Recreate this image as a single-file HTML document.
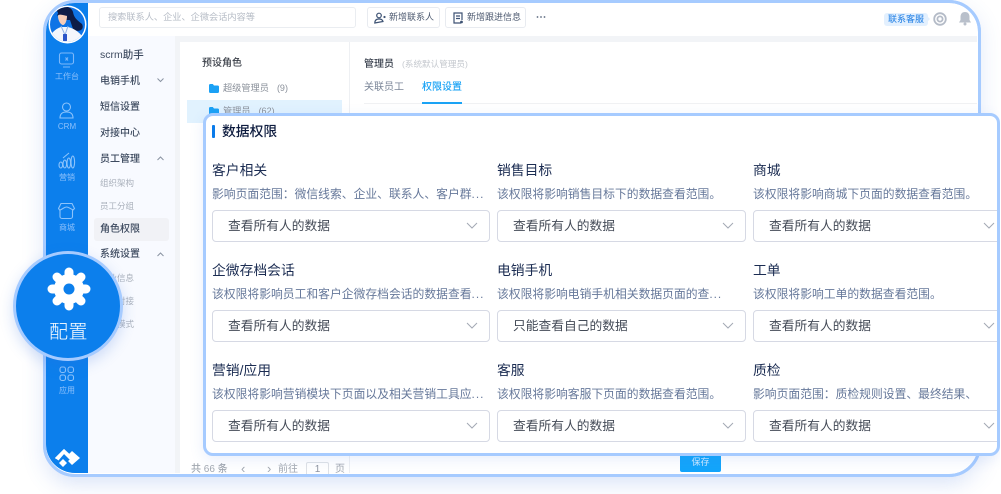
<!DOCTYPE html>
<html lang="zh"><head><meta charset="utf-8"><title>配置</title>
<style>
*{box-sizing:border-box}
html,body{margin:0;padding:0;width:1001px;height:494px;overflow:hidden;background:#fff}
body{font-family:"Liberation Sans","Noto Sans CJK SC",sans-serif;position:relative}
#root{position:absolute;left:0;top:0;width:1001px;height:494px;overflow:hidden;filter:blur(.35px)}
.a{position:absolute;white-space:nowrap}
#win{position:absolute;left:43px;top:0;width:938px;height:477px;border:3px solid #a6cbff;border-radius:32px;background:#fff;overflow:hidden;box-shadow:0 8px 22px rgba(70,120,220,.16)}
#shadow{position:absolute;left:60px;top:440px;width:900px;height:48px;background:linear-gradient(#e8eefc,#fff);filter:blur(6px)}
.side{position:absolute;left:46px;width:42px;text-align:center;color:#8cc0fb;font-size:8px;line-height:10px}
.m{position:absolute;left:100px;font-size:10px;font-weight:500;color:#3d4a5f;line-height:14px;white-space:nowrap}
.s{position:absolute;left:100px;font-size:8.500px;color:#a9b0bb;line-height:12px;white-space:nowrap}
#card{position:absolute;left:203px;top:113px;width:797px;height:343px;background:#fff;border:3px solid #a6cbff;border-radius:10px;box-shadow:0 4px 14px rgba(70,120,220,.12)}
.t{position:absolute;font-size:13.800px;line-height:18px;color:#1b2c52;white-space:nowrap;margin-top:1px}
.d{position:absolute;font-size:11.800px;line-height:16px;color:#66789a;white-space:nowrap;margin-top:1px}
.d i{font-style:normal;letter-spacing:1px}
.sel{position:absolute;height:32px;border:1px solid #d6d9e4;border-radius:4px;background:#fff;font-size:12.750px;line-height:30px;color:#444b57;padding-left:15px;white-space:nowrap}
.sel svg{position:absolute;right:11px;top:11px}
.btn{position:absolute;top:7px;height:21px;border:1px solid #e8ebf0;border-radius:3px;background:#fff;font-size:9px;line-height:19px;color:#4d5a70;white-space:nowrap}
</style></head><body><div id="root">
<div id="shadow"></div>
<div id="win"></div>

<!-- blue rail -->
<div class="a" style="left:46px;top:3px;width:42px;height:470px;background:#0c7fec;border-radius:29px 0 0 29px"></div>
<!-- top strip -->
<div class="a" style="left:88px;top:36px;width:889px;height:6px;background:#f2f4f7"></div>
<!-- second sidebar -->
<div class="a" style="left:88px;top:36px;width:87px;height:437px;background:#f8faff"></div>
<div class="a" style="left:175px;top:36px;width:5px;height:437px;background:#f2f4f7"></div>
<!-- panel divider -->
<div class="a" style="left:349px;top:42px;width:1px;height:431px;background:#eef0f3"></div>

<!-- avatar -->
<svg class="a" style="left:48px;top:5px" width="39" height="39" viewBox="0 0 39 39">
<circle cx="19.500" cy="19.500" r="19" fill="#fff"/>
<clipPath id="c"><circle cx="19.500" cy="19.500" r="17.500"/></clipPath>
<g clip-path="url(#c)">
<rect width="39" height="39" fill="#0f74e6"/>
<path d="M9 6C12 0 23 0 25 7C26 13 29 15 34 19C37 25 30 28 25 24L22 15L14 15Z" fill="#0e1c46"/>
<path d="M10 11C11 7 18 7 19 11C19 16 17 20 15 20C13 20 10 16 10 11Z" fill="#f7cdb8"/>
<path d="M9 11C10 5 18 5 20 11C16 11 12 8 9 11Z" fill="#101c48"/>
<path d="M0 39C1 29 7 24 13 22L20 22C28 24 34 29 39 39Z" fill="#f4f7fc"/>
<path d="M13 21L17 30L20 21" fill="none" stroke="#8fb3e8" stroke-width="1"/>
<rect x="15" y="29" width="4" height="7" rx=".5" fill="#2c55c8"/>
</g></svg>

<!-- rail icons -->
<svg class="a" style="left:58px;top:52px" width="18" height="18" viewBox="0 0 18 18" fill="none" stroke="#7db8fa" stroke-width="1.100"><rect x="1.500" y="1" width="14" height="11" rx="2"/><path d="M5 15h7M7.500 5.500l2.500 3M10 5.500l-2.500 3"/></svg>
<div class="side" style="top:72px">工作台</div>
<svg class="a" style="left:58px;top:101px" width="18" height="18" viewBox="0 0 18 18" fill="none" stroke="#8cc3fb" stroke-width="1.100"><circle cx="8.500" cy="6" r="4"/><path d="M2 17c0-5 3-6 6.500-6s6.500 1 6.500 6z"/></svg>
<div class="side" style="top:122px">CRM</div>
<svg class="a" style="left:58px;top:152px" width="18" height="18" viewBox="0 0 18 18" fill="none" stroke="#8cc3fb" stroke-width="1.100"><ellipse cx="2.800" cy="13" rx="1.800" ry="3"/><ellipse cx="6.800" cy="12" rx="1.800" ry="4"/><ellipse cx="10.800" cy="11" rx="1.800" ry="5"/><ellipse cx="14.800" cy="10" rx="1.800" ry="6"/><path d="M5 6l6-5"/></svg>
<div class="side" style="top:173px">营销</div>
<svg class="a" style="left:58px;top:202px" width="18" height="18" viewBox="0 0 18 18" fill="none" stroke="#8cc3fb" stroke-width="1.100"><path d="M3 1.500h11l2.500 5-2 2v6a2 2 0 0 1-2 2H4a2 2 0 0 1-2-2v-6l-1.500-2z"/><path d="M2 8c3-1 4-3 6.500-3s4 2 7 3"/></svg>
<div class="side" style="top:223px">商城</div>
<svg class="a" style="left:59px;top:366px" width="16" height="16" viewBox="0 0 16 16" fill="none" stroke="#8cc3fb" stroke-width="1.100"><rect x="1" y="1" width="5.500" height="5.500" rx="2"/><rect x="9" y="1" width="5.500" height="5.500" rx="2"/><rect x="1" y="9" width="5.500" height="5.500" rx="2"/><rect x="9" y="9" width="5.500" height="5.500" rx="2"/></svg>
<div class="side" style="top:386px">应用</div>
<!-- logo -->
<svg class="a" style="left:54px;top:448px" width="28" height="20" viewBox="0 0 28 20"><path d="M1 10L10 1L15 6L18 3L26 10L18 17L14 13L18 10L15.500 7.500L10 6L5 11L2 11Z" fill="#fff"/><path d="M10 1L20 10L17 13L10 6L4.500 12.500L1 10Z" fill="#fff"/><path d="M5 15L9 11L13 15L9 19Z" fill="#fff"/></svg>

<!-- top bar -->
<div class="a" style="left:99px;top:7px;width:257px;height:21px;border:1px solid #eaedf1;border-radius:3px;background:#fff;font-size:9.200px;line-height:19px;color:#b6bcc6;padding-left:8px">搜索联系人、企业、企微会话内容等</div>
<div class="btn" style="left:367px;width:73px;padding-left:21px">新增联系人</div>
<svg class="a" style="left:374px;top:12px" width="12" height="12" viewBox="0 0 12 12" fill="none" stroke="#3d5273" stroke-width="1.200"><circle cx="5" cy="3.500" r="2.300"/><path d="M.8 11c0-3 2-4 4.200-4s3.500.7 4 2.500z"/><circle cx="10.500" cy="5" r=".5"/></svg>
<div class="btn" style="left:445px;width:81px;padding-left:21px">新增跟进信息</div>
<svg class="a" style="left:452px;top:12px" width="12" height="12" viewBox="0 0 12 12" fill="none" stroke="#3d5273" stroke-width="1.200"><path d="M9 11H2V1h8v7"/><path d="M4 4h4M4 6.500h4"/><circle cx="9.500" cy="10" r=".8" fill="#3d5273"/></svg>
<svg class="a" style="left:536px;top:15px" width="10" height="4" viewBox="0 0 10 4" fill="#5d6a80"><circle cx="1.500" cy="2" r=".9"/><circle cx="5" cy="2" r=".9"/><circle cx="8.500" cy="2" r=".9"/></svg>
<div class="a" style="left:884px;top:13px;width:44px;height:13px;background:#e3f0fe;border-radius:3px;font-size:9px;line-height:13px;color:#3a8ee8;text-align:center;font-weight:500">联系客服</div>
<div class="a" style="left:927px;top:16px;width:0;height:0;border:3.500px solid transparent;border-left-color:#e3f0fe"></div>
<svg class="a" style="left:933px;top:12px" width="14" height="14" viewBox="0 0 14 14" fill="none" stroke="#b4bbc7" stroke-width="1.800"><circle cx="7" cy="7" r="5.800"/><circle cx="7" cy="7" r="2.600"/></svg>
<svg class="a" style="left:958px;top:11px" width="14" height="15" viewBox="0 0 14 15"><path d="M7 1c3 0 4.500 2 4.500 5v3L13 11.500H1L2.500 9V6C2.500 3 4 1 7 1z" fill="#b9c0cb"/><circle cx="7" cy="13" r="1.500" fill="#b9c0cb"/></svg>

<!-- sidebar menu -->
<div class="m" style="top:48px;font-size:10.500px">scrm助手</div>
<div class="m" style="top:75px">电销手机</div>
<svg class="a" style="left:156px;top:77px" width="9" height="7" viewBox="0 0 9 7" fill="none" stroke="#8a93a2"><path d="M1.500 1.500L4.500 4.500L7.500 1.500"/></svg>
<div class="m" style="top:101px">短信设置</div>
<div class="m" style="top:127px">对接中心</div>
<div class="m" style="top:153px">员工管理</div>
<svg class="a" style="left:156px;top:155px" width="9" height="7" viewBox="0 0 9 7" fill="none" stroke="#8a93a2"><path d="M1.500 5L4.500 2L7.500 5"/></svg>
<div class="s" style="top:177px">组织架构</div>
<div class="s" style="top:200px">员工分组</div>
<div class="a" style="left:94px;top:218px;width:75px;height:23px;background:#f1f2f6;border-radius:3px"></div>
<div class="m" style="top:223px">角色权限</div>
<div class="m" style="top:248px">系统设置</div>
<svg class="a" style="left:156px;top:251px" width="9" height="7" viewBox="0 0 9 7" fill="none" stroke="#8a93a2"><path d="M1.500 5L4.500 2L7.500 5"/></svg>
<div class="s" style="top:272px">企业信息</div>
<div class="s" style="top:295px">系统对接</div>
<div class="s" style="top:318px">工作模式</div>

<!-- role panel -->
<div class="a" style="left:202px;top:57px;font-size:10px;line-height:14px;font-weight:500;color:#3a3f48">预设角色</div>
<svg class="a" style="left:209px;top:84px" width="10" height="9" viewBox="0 0 10 9"><path d="M0 1.500C0 .6.500 0 1.300 0h2.500L5 1.500h3.700c.8 0 1.300.5 1.300 1.300V7.500C10 8.400 9.500 9 8.700 9H1.300C.5 9 0 8.400 0 7.500z" fill="#1ba1f5"/></svg>
<div class="a" style="left:223px;top:81px;font-size:9.200px;line-height:14px;color:#8a909a">超级管理员<span style="margin-left:8px;font-size:9px;color:#8a909a">(9)</span></div>
<div class="a" style="left:187px;top:100px;width:155px;height:23px;background:#e1f2fe"></div>
<svg class="a" style="left:209px;top:107px" width="10" height="9" viewBox="0 0 10 9"><path d="M0 1.500C0 .6.500 0 1.300 0h2.500L5 1.500h3.700c.8 0 1.300.5 1.300 1.300V7.500C10 8.400 9.500 9 8.700 9H1.300C.5 9 0 8.400 0 7.500z" fill="#1ba1f5"/></svg>
<div class="a" style="left:223px;top:104px;font-size:9.200px;line-height:14px;color:#8a909a">管理员<span style="margin-left:8px;font-size:9px">(62)</span></div>

<!-- right head -->
<div class="a" style="left:364px;top:57px;font-size:10px;line-height:14px;font-weight:500;color:#3c4350">管理员<span style="margin-left:8px;font-size:8.600px;font-weight:400;color:#c4c8ce">(系统默认管理员)</span></div>
<div class="a" style="left:364px;top:81px;font-size:10px;line-height:14px;color:#7b8698">关联员工</div>
<div class="a" style="left:422px;top:81px;font-size:10px;line-height:14px;color:#1aa3f5;font-weight:500">权限设置</div>
<div class="a" style="left:364px;top:103px;width:613px;height:1px;background:#f0f1f3"></div>
<div class="a" style="left:422px;top:102px;width:40px;height:2px;background:#1aa3f5"></div>

<!-- bottom content -->
<div class="a" style="left:191px;top:463px;font-size:10px;line-height:14px;color:#a2a8b0;font-weight:500">共 66 条</div>
<div class="a" style="left:241px;top:462px;font-size:13px;line-height:14px;color:#a2a8b0">‹</div>
<div class="a" style="left:267px;top:462px;font-size:13px;line-height:14px;color:#a2a8b0">›</div>
<div class="a" style="left:278px;top:463px;font-size:10px;line-height:14px;color:#a2a8b0">前往</div>
<div class="a" style="left:306px;top:462px;width:23px;height:13px;border:1px solid #dfe2e6;border-bottom:0;border-radius:2px 2px 0 0;font-size:10px;line-height:14px;color:#8f95a0;text-align:center">1</div>
<div class="a" style="left:335px;top:463px;font-size:10px;line-height:14px;color:#a2a8b0">页</div>
<div class="a" style="left:680px;top:452px;width:41px;height:20px;background:#13a5fb;border-radius:2px;color:#cfeaff;font-size:9px;line-height:20px;text-align:center">保存</div>

<!-- window border on top of content -->
<div class="a" style="left:43px;top:0;width:938px;height:477px;border:3px solid #a6cbff;border-radius:32px;pointer-events:none"></div>

<!-- card -->
<div id="card"></div>
<div class="a" style="left:212px;top:125px;width:3px;height:13px;background:#0a7bea;border-radius:1px"></div>
<div class="a" style="left:222px;top:123px;font-size:13.800px;line-height:18px;font-weight:500;color:#0e1c3f">数据权限</div>

<div class="t" style="left:212px;top:161px">客户相关</div>
<div class="d" style="left:212px;top:185px">影响页面范围：微信线索、企业、联系人、客户群<i>...</i></div>
<div class="sel" style="left:212px;top:210px;width:278px">查看所有人的数据<svg width="12" height="8" viewBox="0 0 12 8" fill="none" stroke="#a3a9b4"><path d="M1 1l5 5 5-5"/></svg></div>
<div class="t" style="left:497px;top:161px">销售目标</div>
<div class="d" style="left:497px;top:185px">该权限将影响销售目标下的数据查看范围。</div>
<div class="sel" style="left:497px;top:210px;width:249px">查看所有人的数据<svg width="12" height="8" viewBox="0 0 12 8" fill="none" stroke="#a3a9b4"><path d="M1 1l5 5 5-5"/></svg></div>
<div class="t" style="left:753px;top:161px">商城</div>
<div class="d" style="left:753px;top:185px">该权限将影响商城下页面的数据查看范围。</div>
<div class="sel" style="left:753px;top:210px;width:250px">查看所有人的数据<svg style="right:7px" width="12" height="8" viewBox="0 0 12 8" fill="none" stroke="#a3a9b4"><path d="M1 1l5 5 5-5"/></svg></div>

<div class="t" style="left:212px;top:261px">企微存档会话</div>
<div class="d" style="left:212px;top:285px">该权限将影响员工和客户企微存档会话的数据查看<i>...</i></div>
<div class="sel" style="left:212px;top:310px;width:278px">查看所有人的数据<svg width="12" height="8" viewBox="0 0 12 8" fill="none" stroke="#a3a9b4"><path d="M1 1l5 5 5-5"/></svg></div>
<div class="t" style="left:497px;top:261px">电销手机</div>
<div class="d" style="left:497px;top:285px">该权限将影响电销手机相关数据页面的查<i>...</i></div>
<div class="sel" style="left:497px;top:310px;width:249px">只能查看自己的数据<svg width="12" height="8" viewBox="0 0 12 8" fill="none" stroke="#a3a9b4"><path d="M1 1l5 5 5-5"/></svg></div>
<div class="t" style="left:753px;top:261px">工单</div>
<div class="d" style="left:753px;top:285px">该权限将影响工单的数据查看范围。</div>
<div class="sel" style="left:753px;top:310px;width:250px">查看所有人的数据<svg style="right:7px" width="12" height="8" viewBox="0 0 12 8" fill="none" stroke="#a3a9b4"><path d="M1 1l5 5 5-5"/></svg></div>

<div class="t" style="left:212px;top:361px">营销/应用</div>
<div class="d" style="left:212px;top:385px">该权限将影响营销模块下页面以及相关营销工具应<i>...</i></div>
<div class="sel" style="left:212px;top:410px;width:278px">查看所有人的数据<svg width="12" height="8" viewBox="0 0 12 8" fill="none" stroke="#a3a9b4"><path d="M1 1l5 5 5-5"/></svg></div>
<div class="t" style="left:497px;top:361px">客服</div>
<div class="d" style="left:497px;top:385px">该权限将影响客服下页面的数据查看范围。</div>
<div class="sel" style="left:497px;top:410px;width:249px">查看所有人的数据<svg width="12" height="8" viewBox="0 0 12 8" fill="none" stroke="#a3a9b4"><path d="M1 1l5 5 5-5"/></svg></div>
<div class="t" style="left:753px;top:361px">质检</div>
<div class="d" style="left:753px;top:385px">影响页面范围：质检规则设置、最终结果、</div>
<div class="sel" style="left:753px;top:410px;width:250px">查看所有人的数据<svg style="right:7px" width="12" height="8" viewBox="0 0 12 8" fill="none" stroke="#a3a9b4"><path d="M1 1l5 5 5-5"/></svg></div>
<div class="a" style="left:997px;top:125px;width:3px;height:320px;background:#a6cbff"></div>
<div class="a" style="left:1000px;top:100px;width:1px;height:394px;background:#fff"></div>

<!-- config circle -->
<div class="a" style="left:13px;top:251px;width:110px;height:110px;border-radius:50%;background:#0c7fec;border:3px solid #a6cbff;box-shadow:0 5px 14px rgba(50,110,220,.22)"></div>
<svg class="a" style="left:47px;top:267px" width="44" height="44" viewBox="-22 -22 44 44"><g stroke="#fff" stroke-width="9" stroke-linecap="round"><path d="M0 0V-17M0 0V17M0 0H17M0 0H-17M0 0L12 -12M0 0L-12 -12M0 0L12 12M0 0L-12 12"/></g><circle r="15" fill="#fff"/><circle r="5.500" fill="#0c7fec"/></svg>
<div class="a" style="left:49px;top:321px;font-size:19px;line-height:24px;color:#fff;letter-spacing:.5px;font-weight:300">配置</div>
</div></body></html>
